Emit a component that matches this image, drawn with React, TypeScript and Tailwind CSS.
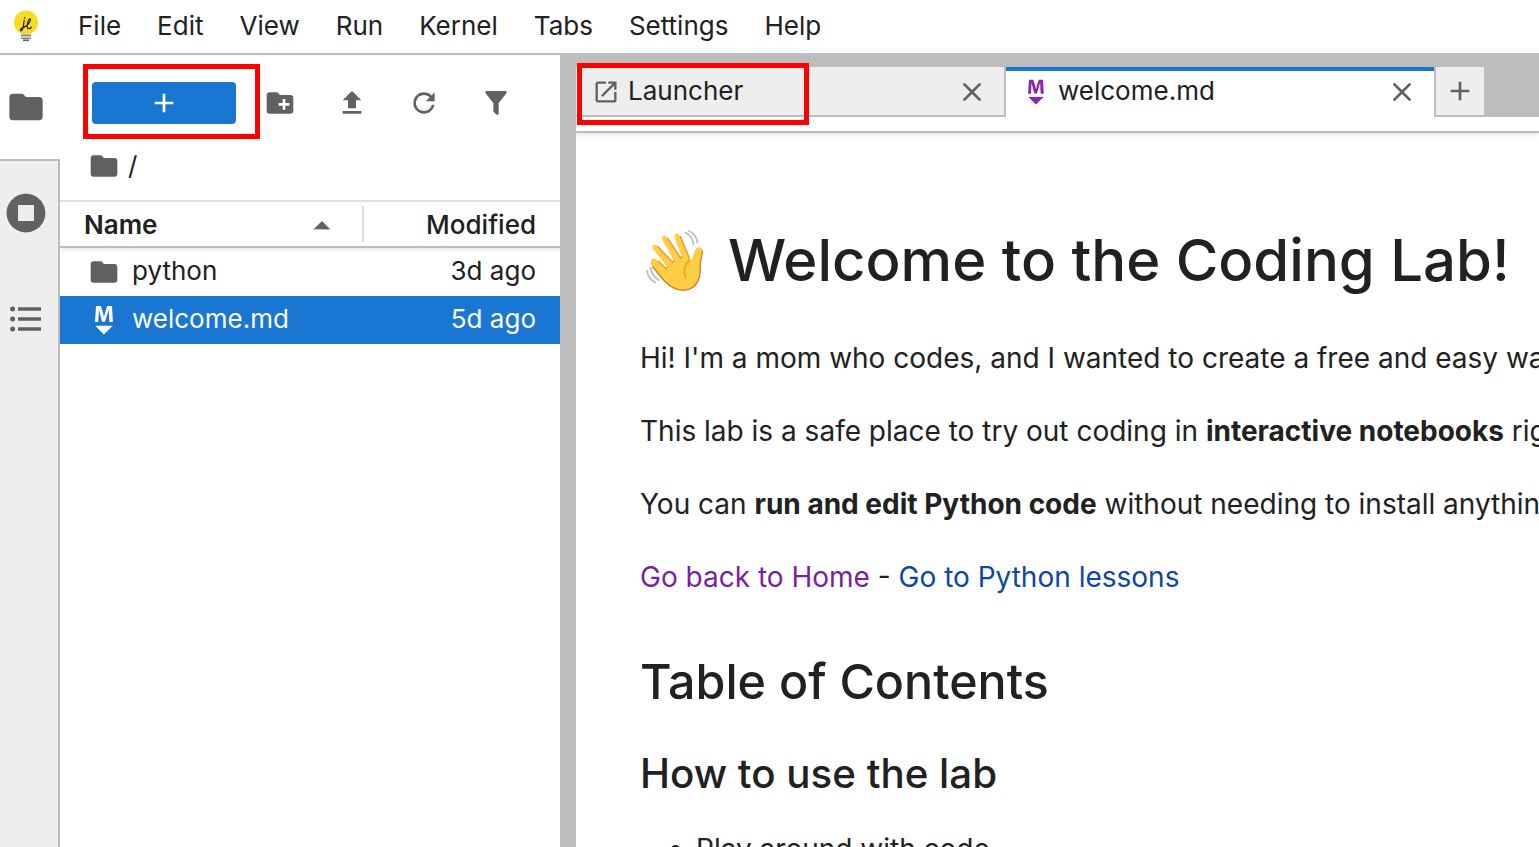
import type { ReactNode } from "react";

const PATHS = {
  folder: "M10 4H4c-1.1 0-1.99.9-1.99 2L2 18c0 1.1.9 2 2 2h16c1.1 0 2-.9 2-2V8c0-1.1-.9-2-2-2h-8l-2-2z",
  newFolder:
    "M20 6h-8l-2-2H4c-1.11 0-1.99.89-1.99 2L2 18c0 1.11.89 2 2 2h16c1.11 0 2-.89 2-2V8c0-1.11-.89-2-2-2zm-1 8h-3v3h-2v-3h-3v-2h3V9h2v3h3v2z",
  upload: "M5 20h14v-2H5v2zm0-10h4v6h6v-6h4l-7-7-7 7z",
  refresh:
    "M9 13.5c-2.49 0-4.5-2.01-4.5-4.5S6.51 4.5 9 4.5c1.24 0 2.36.52 3.17 1.33L10 8h5V3l-1.76 1.76C12.15 3.68 10.66 3 9 3 5.69 3 3.01 5.69 3.01 9S5.69 15 9 15c2.97 0 5.43-2.16 5.9-5h-1.52c-.46 2-2.24 3.5-4.38 3.5z",
  filter:
    "M14,12V19.88C14.04,20.18 13.94,20.5 13.71,20.71C13.32,21.1 12.69,21.1 12.3,20.71L10.29,18.7C10.06,18.47 9.96,18.16 10,17.87V12H9.97L4.21,4.62C3.87,4.19 3.95,3.56 4.38,3.22C4.57,3.08 4.78,3 5,3V3H19V3C19.22,3 19.43,3.08 19.62,3.22C20.05,3.56 20.13,4.19 19.79,4.62L14.03,12H14Z",
  markdown:
    "M5 14.9h12l-6.1 6zm9.4-6.8c0-1.3-.1-2.9-.1-4.5-.4 1.4-.9 2.9-1.3 4.3l-1.3 4.3h-2L8.5 7.9c-.4-1.3-.7-2.9-1-4.3-.1 1.6-.1 3.2-.2 4.6L7 12.4H4.8l.7-11h3.3L10 5c.4 1.2.7 2.7 1 3.9.3-1.2.7-2.6 1-3.9l1.2-3.7h3.3l.6 11h-2.4z",
  launcher:
    "M19 19H5V5h7V3H5a2 2 0 00-2 2v14a2 2 0 002 2h14c1.1 0 2-.9 2-2v-7h-2v7zM14 3v2h3.59l-9.83 9.83 1.41 1.41L19 6.41V10h2V3h-7z",
  close: "M19 6.41L17.59 5 12 10.59 6.41 5 5 6.41 10.59 12 5 17.59 6.41 19 12 13.41 17.59 19 19 17.59 13.41 12z",
  add: "M19 13h-6v6h-2v-6H5v-2h6V5h2v6h6v2z",
  caretUp: "M5.2 10.5 9 6.8l3.8 3.8z",
  stop: "M256 8C119 8 8 119 8 256s111 248 248 248 248-111 248-248S393 8 256 8zM358 358H154V154H358z",
};

function Icon({ name, box = 24, className }: { name: keyof typeof PATHS; box?: number; className: string }) {
  return (
    <svg viewBox={`0 0 ${box} ${box}`} className={`shrink-0 fill-current ${className}`} aria-hidden="true">
      <path d={PATHS[name]} fillRule="evenodd" />
    </svg>
  );
}

function Bulb() {
  return (
    <svg viewBox="0 0 28 34" className="mb-[3px] ml-3 h-[34px] w-7 shrink-0" aria-hidden="true">
      <circle cx="14" cy="14.600" r="12" fill="#f7dc1e" />
      <g fill="none" stroke="#1d1d1d" strokeLinecap="round" strokeLinejoin="round">
        <path d="M12.2 12.4 L11.2 18.8 C10.8 21.6 9.3 23.4 8.5 22.6 C7.7 21.6 9.9 20 12.1 19.1 C15.6 17.6 18.800 13.6 18.4 11.3 C17.9 9.700 16.3 11.9 15.7 14.7 C15 18 15 20.400 16.5 20.700 C17.8 20.900 18.8 19.900 19.3 19.1" strokeWidth="1.2" />
        <path d="M12.800 9.800v.2" strokeWidth="1.5" />
      </g>
      <path d="M9 27.300h10M9 30.200h10" stroke="#858585" strokeWidth="1.6" />
      <path d="M9 28.700h10" stroke="#c6c6c6" strokeWidth="1" />
      <path d="M11 32.300h6" stroke="#666" strokeWidth="1.7" />
    </svg>
  );
}

function Wave() {
  return (
    <svg viewBox="0 0 62 64" className="mt-[-2px] ml-[4px] h-16 w-[62px] shrink-0" aria-hidden="true">
      <g fill="none" stroke="#b5c3ca" strokeWidth="1.8" strokeLinecap="round">
        <path d="M41.5 3.5C46.500 6 49 10.500 49.500 15.500" />
        <path d="M45 2C50 4.500 53 8.500 53.300 13.500" />
        <path d="M6.500 39C7.500 44.500 10 48.500 14.800 51" />
        <path d="M3 42C4 47.500 7 51.500 11.500 53.500" />
      </g>
      <path
        d="M7.600 30.800C9 28.500 11.500 29.500 13.500 31.500L22 39.500L23.300 38L9.300 20.500C6.800 16.500 10.500 14 13.300 17L28.500 33.200L30 31.800L18.500 11.500C16.400 7.700 20.500 4.700 23.300 8.700L36.300 28.800L38 27.800L30.700 8.800C29.500 4.200 33.800 2.800 36 6.800L45.500 29.500C46.200 31.500 48 31 48.500 29L50.500 22.500C51.500 17.500 58.500 16.500 58.500 21.500C58.500 27.500 56 31 56 37C57.500 47.500 53.500 60.200 40.500 61.200C31.500 62 24.500 56.500 19 50.500L8.500 37.500C6.600 35 6 33 7.600 30.800Z"
        fill="#ffce43"
      />
      <path
        d="M58.500 21.500C58.500 27.500 56 31 56 37C57.500 47.500 53.500 60.200 40.500 61.200C31.500 62 24.500 56.500 19 50.500L8.500 37.500"
        fill="none"
        stroke="#d17b31"
        strokeWidth="1.3"
      />
      <path d="M45.600 31C40.500 35.500 38.500 41 42 49.500" fill="none" stroke="#eea22e" strokeWidth="1.7" strokeLinecap="round" />
      <g fill="none" stroke="#e69a32" strokeWidth="1.4" strokeLinecap="round">
        <path d="M14 17.700L28.800 33.400L30 31.800M24 9.600L36.500 29L38 27.800M36.500 7.700L45.500 29.500M14.500 32.300L22 39.500L23.300 38" />
      </g>
    </svg>
  );
}

function Row({ icon, name, when, selected }: { icon: ReactNode; name: string; when: string; selected?: boolean }) {
  return (
    <div className={`flex h-12 shrink-0 items-center pr-6 pl-7 ${selected ? "bg-[#1976d2] text-white" : ""}`}>
      {icon}
      <span className="mb-0.5 ml-3 flex-1 leading-[46px]">{name}</span>
      <span className="mb-0.5 leading-[46px]">{when}</span>
    </div>
  );
}

const menus = ["File", "Edit", "View", "Run", "Kernel", "Tabs", "Settings", "Help"];

export default function App() {
  return (
    <div className="relative flex h-[847px] w-[1539px] flex-col overflow-hidden bg-white font-['Inter',sans-serif] text-[26px] whitespace-nowrap text-[#212121]">
      <header className="flex h-[55px] shrink-0 items-center border-b-2 border-[#bdbdbd]">
        <Bulb />
        <nav className="mb-0.5 ml-5 flex">
          {menus.map((m) => (
            <span key={m} className="px-[18px] leading-[50px]">
              {m}
            </span>
          ))}
        </nav>
      </header>

      <div className="flex min-h-0 flex-1">
        <aside className="flex w-[60px] shrink-0 flex-col text-[#616161]">
          <div className="flex h-[104px] items-center pl-1.5">
            <Icon name="folder" className="size-10" />
          </div>
          <div className="flex flex-1 flex-col border-t-2 border-r-2 border-[#bdbdbd] bg-[#eeeeee] pl-1.5">
            <div className="flex h-[104px] items-center">
              <Icon name="stop" box={512} className="size-10" />
            </div>
            <div className="flex h-[108px] items-center">
              <svg viewBox="0 0 40 40" className="size-10 fill-current" aria-hidden="true">
                <path d="M12 8.200h23v3.600H12zM12 18.200h23v3.600H12zM12 28.200h23v3.600H12z" />
                <circle cx="6.600" cy="10" r="2.500" />
                <circle cx="6.600" cy="20" r="2.500" />
                <circle cx="6.600" cy="30" r="2.500" />
              </svg>
            </div>
          </div>
        </aside>

        <section className="flex w-[500px] shrink-0 flex-col">
          <div className="flex h-24 items-center pl-8 text-[#616161]">
            <button className="flex h-[42px] w-36 items-center justify-center rounded-[4px] bg-[#1976d2] text-white">
              <Icon name="add" className="size-8" />
            </button>
            <div className="ml-7 flex gap-10">
              <Icon name="newFolder" className="size-8" />
              <Icon name="upload" className="size-8" />
              <Icon name="refresh" box={18} className="size-8" />
              <Icon name="filter" className="size-8" />
            </div>
          </div>
          <div className="-mt-px flex h-[50px] items-start pl-7">
            <Icon name="folder" className="size-8 text-[#616161]" />
            <span className="ml-2 leading-8">/</span>
          </div>
          <div className="z-10 flex h-12 shrink-0 items-center border-t-2 border-b-2 border-t-[#e0e0e0] border-b-[#bdbdbd] pr-6 pl-6 font-medium shadow-[0_2px_4px_rgba(0,0,0,0.1)] [clip-path:inset(0_0_-8px_0)]">
            <span className="flex-1 font-semibold">Name</span>
            <Icon name="caretUp" box={18} className="mt-[3px] mr-5 size-10 text-[#616161]" />
            <div className="h-9 w-0.5 bg-[#e0e0e0]" />
            <span className="w-[172px] text-right">Modified</span>
          </div>
          <Row icon={<Icon name="folder" className="size-8 text-[#616161]" />} name="python" when="3d ago" />
          <Row icon={<Icon name="markdown" box={22} className="size-8" />} name="welcome.md" when="5d ago" selected />
        </section>

        <div className="w-4 shrink-0 bg-[#bdbdbd]" />

        <main className="flex min-w-0 flex-1 flex-col">
          <div className="flex h-[62px] shrink-0 bg-[#bdbdbd] pt-3">
            <div className="flex w-[430px] items-center border-r-2 border-b-2 border-[#bdbdbd] bg-[#eeeeee] pr-4 pl-4">
              <Icon name="launcher" className="mt-0.5 size-7 text-[#616161]" />
              <span className="ml-2 flex-1 leading-[48px]">Launcher</span>
              <Icon name="close" className="mt-0.5 size-8 text-[#616161]" />
            </div>
            <div className="flex w-[428px] items-center border-t-4 border-[#1976d2] bg-white pr-4 pb-1 pl-4">
              <Icon name="markdown" box={22} className="size-7 text-[#8e24aa]" />
              <span className="mb-[3px] ml-2 flex-1 leading-[39px]">welcome.md</span>
              <Icon name="close" className="size-8 text-[#616161]" />
            </div>
            <div className="ml-0.5 flex h-12 w-12 items-center justify-center bg-[#eeeeee] text-[#616161]">
              <Icon name="add" className="size-8" />
            </div>
          </div>
          <div className="h-4 shrink-0 border-b-2 border-[#bdbdbd] shadow-[0_2px_4px_rgba(0,0,0,0.1)] [clip-path:inset(0_0_-8px_0)]" />

          <article className="flex min-h-0 flex-1 flex-col pt-[98px] pl-16 text-[28px] leading-[44.8px]">
            <h1 className="flex h-[58px] shrink-0 text-[58.06px] leading-[58px] font-medium">
              <Wave />
              <span className="ml-[22px]">Welcome to the Coding Lab!</span>
            </h1>
            <div className="mt-[47.4px] flex shrink-0 flex-col gap-7">
              <p>Hi! I'm a mom who codes, and I wanted to create a free and easy way</p>
              <p>
                This lab is a safe place to try out coding in <strong className="font-bold">interactive notebooks</strong> right
              </p>
              <p>
                You can <strong className="font-bold">run and edit Python code</strong> without needing to install anything
              </p>
              <p>
                <a className="text-[#7b1fa2]">Go back to Home</a> - <a className="text-[#0d47a1]">Go to Python lessons</a>
              </p>
            </div>
            <h2 className="mt-[58.6px] shrink-0 text-[48.38px] leading-[48.4px] font-medium">Table of Contents</h2>
            <h3 className="mt-[47.4px] shrink-0 text-[40.32px] leading-[40.3px] font-medium">How to use the lab</h3>
            <ul className="mt-[32.4px] shrink-0 list-disc pl-14">
              <li>Play around with code</li>
            </ul>
          </article>
        </main>
      </div>

      <div className="absolute top-[64px] left-[83px] h-[75px] w-[177px] border-[5px] border-[#ff0000]" />
      <div className="absolute top-[63px] left-[577px] h-[62px] w-[232px] border-[5px] border-[#ff0000]" />
    </div>
  );
}
